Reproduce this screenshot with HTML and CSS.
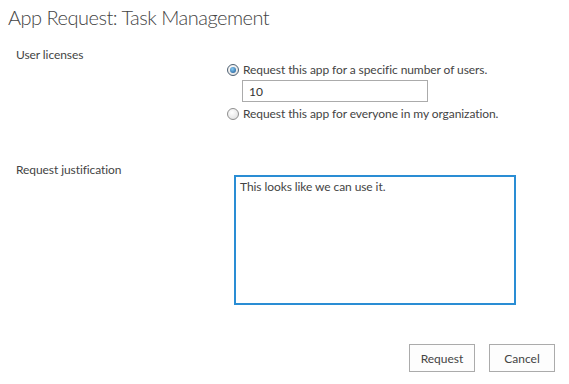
FILE: index.html
```html
<!DOCTYPE html>
<html lang="en">
<head>
<meta charset="UTF-8">
<title>App Request: Task Management</title>
<link rel="stylesheet" href="styles.css">
</head>
<body>
    <div class="page">
        <h1 class="title">App Request: Task Management</h1>

        <div class="section licenses">
            <div class="label">User licenses</div>
            <div class="field">
                <label class="option">
                    <span class="radio checked"></span>
                    <span>Request this app for a specific number of users.</span>
                </label>
                <input type="text" class="count" value="10">
                <label class="option">
                    <span class="radio"></span>
                    <span>Request this app for everyone in my organization.</span>
                </label>
            </div>
        </div>

        <div class="section justification">
            <div class="label">Request justification</div>
            <div class="field">
                <textarea class="reason">This looks like we can use it.</textarea>
            </div>
        </div>

        <div class="actions">
            <button type="button">Request</button>
            <button type="button">Cancel</button>
        </div>
    </div>
</body>
</html>
```

FILE: styles.css
```css
body {
    margin: 0;
    background: #fff;
    font-family: Lato, "Open Sans", sans-serif;
    font-size: 12px;
    letter-spacing: -0.08px;
    color: #444;
}

.page {
    width: 569px;
    height: 384px;
    padding: 3px 0 0 0;
    box-sizing: border-box;
}

.title {
    margin: 0 0 0 8px;
    font-size: 20px;
    font-weight: 300;
    letter-spacing: -0.5px;
    color: #444;
    line-height: 28px;
}

.section {
    display: grid;
    grid-template-columns: 211px 1fr;
    padding-left: 16px;
}

.licenses {
    margin-top: 16px;
}

.justification {
    margin-top: 40px;
}

.label {
    line-height: 16px;
}

.licenses .field {
    padding-top: 15px;
}

.option {
    display: flex;
    align-items: center;
    gap: 4px;
    line-height: 16px;
}

.radio {
    width: 12px;
    height: 12px;
    border-radius: 50%;
    border: 1px solid #8e8e8e;
    background: radial-gradient(circle at 40% 35%, #fff, #dcdcdc);
    box-sizing: border-box;
    position: relative;
}

.radio.checked {
    border-color: #4e6072;
}

.radio.checked::after {
    content: "";
    position: absolute;
    left: 2px;
    top: 2px;
    width: 6px;
    height: 6px;
    border-radius: 50%;
    background: radial-gradient(circle at 40% 35%, #86ccf6, #16508c);
}

.count {
    display: block;
    margin: 2px 0 4px 15px;
    width: 186px;
    height: 22px;
    box-sizing: border-box;
    border: 1px solid #ababab;
    padding: 0 6px;
    font-family: inherit;
    font-size: 12px;
    color: #333;
}

.justification .field {
    padding-top: 13px;
    padding-left: 7px;
}

.reason {
    display: block;
    width: 282px;
    height: 130px;
    box-sizing: border-box;
    border: 1px solid #2a8dd4;
    outline: 1px solid #2a8dd4;
    outline-offset: -2px;
    padding: 3px 5px;
    font-family: inherit;
    font-size: 12px;
    letter-spacing: -0.08px;
    color: #444;
    resize: none;
}

.actions {
    display: flex;
    justify-content: flex-end;
    gap: 14px;
    margin-top: 39px;
    padding-right: 14px;
}

.actions button {
    width: 66px;
    height: 28px;
    background: #fdfdfd;
    border: 1px solid #ababab;
    font-family: inherit;
    font-size: 12px;
    color: #444;
    padding: 0;
}
```
